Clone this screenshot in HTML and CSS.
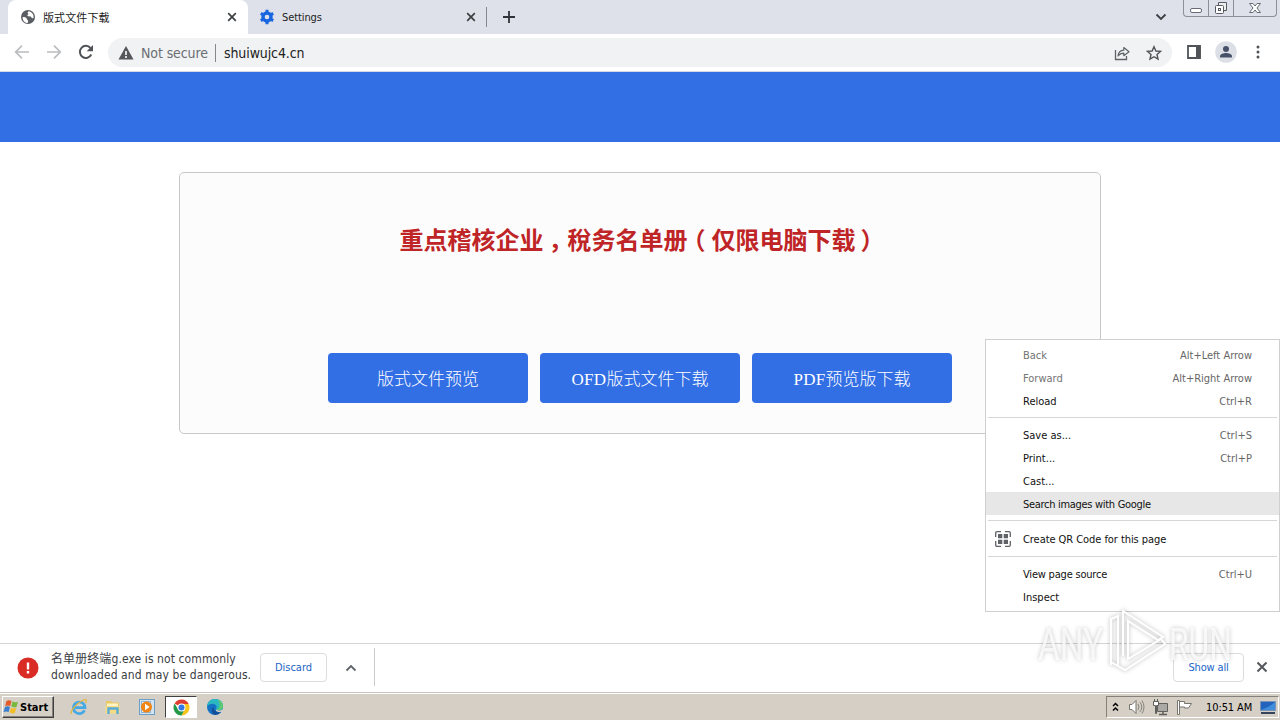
FILE: index.html
```html
<!DOCTYPE html>
<html lang="zh-CN">
<head>
	<meta charset="UTF-8">
	<title>版式文件下载</title>
	<link rel="stylesheet" href="styles.css">
</head>
<body>
	<div class="screen">
		<!-- tabs -->
		<div class="tabs">
			<div class="tab active">
				<svg class="tab-icon" width="16" height="16" viewBox="0 0 16 16"><circle cx="8" cy="8" r="7" fill="#5a5d61"/><path d="M2.6 8.2c2.2-.6 3.800.2 4.200 1.700.3 1 1.400.8 1.300 2.200l-.4 1.900C4.700 14 2.500 11.500 2.600 8.200zM8.500 2.300l-1 1.500 1 1.200-1.300 1.300 1 1 2.600.2 1.200 1.800 1.500-.3c.6-3.200-1.600-6.200-5-6.700z" fill="#fff"/></svg>
				<span class="tab-title cjk">版式文件下载</span>
				<svg class="tab-close" width="10" height="10" viewBox="0 0 10 10"><path d="M1.200 1.200l7.600 7.600M8.800 1.200l-7.600 7.600" stroke="#3c4043" stroke-width="1.700"/></svg>
			</div>
			<div class="tab second">
				<svg class="tab-icon" width="16" height="16" viewBox="0 0 16 16"><circle cx="8" cy="8" r="4" fill="none" stroke="#1a66e0" stroke-width="3.400"/><path d="M8 .8v3M8 12.200v3M1.800 4.400l2.600 1.500M11.600 10.100l2.600 1.500M1.800 11.600l2.600-1.500M11.600 5.900l2.600-1.500" stroke="#1a66e0" stroke-width="3"/></svg>
				<span class="tab-title">Settings</span>
				<svg class="tab-close" width="10" height="10" viewBox="0 0 10 10"><path d="M1.200 1.200l7.600 7.600M8.800 1.200l-7.600 7.600" stroke="#3c4043" stroke-width="1.700"/></svg>
			</div>
			<svg class="new-tab" width="12" height="12" viewBox="0 0 12 12"><path d="M6 0v12M0 6h12" stroke="#30343a" stroke-width="1.800"/></svg>
			<svg class="tab-search" width="12" height="8" viewBox="0 0 12 8"><path d="M1.500 1.500L6 6l4.500-4.500" fill="none" stroke="#3c4043" stroke-width="1.800"/></svg>
			<div class="win-btns">
				<span><svg width="14" height="16" viewBox="0 0 14 16"><rect x="1.500" y="8.500" width="11" height="4" rx="1.500" fill="#fff" stroke="#666b74"/></svg></span>
				<span><svg width="14" height="16" viewBox="0 0 14 16"><path d="M4.500 5V2.500h8v8H10" fill="#eee" stroke="#555a63"/><rect x="1.500" y="5.500" width="8" height="8" rx="1" fill="#fff" stroke="#555a63"/><rect x="4.500" y="8.500" width="2" height="2" fill="none" stroke="#555a63"/></svg></span>
				<span><svg width="14" height="16" viewBox="0 0 14 16"><path d="M1.500 3.500h3.500l2 2.500 2-2.500h3.500L9 8l3.500 4.500H9L7 10l-2 2.500H1.500L5 8z" fill="#fff" stroke="#666b74"/></svg></span>
			</div>
		</div>

		<!-- toolbar -->
		<div class="toolbar">
			<span class="tool"><svg width="16" height="16" viewBox="0 0 16 16"><path d="M15 8H2M8 1.700L1.700 8 8 14.300" fill="none" stroke="#babcbe" stroke-width="1.700"/></svg></span>
			<span class="tool"><svg width="16" height="16" viewBox="0 0 16 16"><path d="M1 8h13M8 1.700L14.300 8 8 14.300" fill="none" stroke="#babcbe" stroke-width="1.700"/></svg></span>
			<span class="tool"><svg width="16" height="16" viewBox="0 0 16 16"><path d="M13.300 10.500A6 6 0 1 1 12.500 4" fill="none" stroke="#505357" stroke-width="2"/><path d="M15 1v6.300H8.700z" fill="#505357"/></svg></span>
			<div class="omnibox">
				<svg class="warn" width="16" height="14" viewBox="0 0 16 14"><path d="M8 0l7.500 13.500H.5z" fill="#54575b"/><path d="M8 5v4M8 10v2" stroke="#fff" stroke-width="1.600"/></svg>
				<span class="insecure">Not secure</span>
				<span class="url">shuiwujc4.cn</span>
				<svg class="share" width="16" height="16" viewBox="0 0 16 16"><path d="M1.500 5v9.500h11V11" fill="none" stroke="#5f6368" stroke-width="1.300"/><path d="M4 11c.4-4 2.500-5.700 5.800-5.800V2.500L15 6.700l-5.200 4V8.200C7.500 8.200 5.500 9 4 11z" fill="none" stroke="#5f6368" stroke-width="1.200" stroke-linejoin="round"/></svg>
				<svg class="star" width="16" height="16" viewBox="0 0 16 16"><path d="M8 1.700l1.900 4.300 4.600.4-3.500 3.100 1 4.600L8 11.700l-4 2.400 1-4.600-3.500-3.100 4.600-.4z" fill="none" stroke="#505357" stroke-width="1.400"/></svg>
			</div>
			<span class="tool"><svg width="14" height="14" viewBox="0 0 14 14"><path d="M1 1h12v12H1z" fill="#fff" stroke="#505357" stroke-width="1.800"/><path d="M9 1h4.500v12H9z" fill="#505357"/></svg></span>
			<span class="tool"><svg width="22" height="22" viewBox="0 0 22 22"><circle cx="11" cy="11" r="10.800" fill="#dce0e6"/><circle cx="11" cy="8" r="3" fill="#475069"/><path d="M5 16.500v-1.300c0-2 3.700-3.200 6-3.200s6 1.200 6 3.200v1.300z" fill="#475069"/></svg></span>
			<span class="tool"><svg width="4" height="14" viewBox="0 0 4 14"><circle cx="2" cy="2" r="1.500" fill="#505357"/><circle cx="2" cy="7" r="1.500" fill="#505357"/><circle cx="2" cy="12" r="1.500" fill="#505357"/></svg></span>
		</div>

		<!-- page -->
		<div class="page">
			<div class="header"></div>
			<div class="box">
				<h1>重点稽核企业<span class="comma">，</span>稅务名单册<span class="open">（</span>仅限电脑下载<span class="close">）</span></h1>
				<div class="btns">
					<a class="btn">版式文件预览</a>
					<a class="btn"><span class="latin">OFD</span>版式文件下载</a>
					<a class="btn"><span class="latin">PDF</span>预览版下载</a>
				</div>
			</div>
		</div>

		<!-- download bar -->
		<div class="downloads">
			<svg class="danger" width="22" height="22" viewBox="0 0 22 22"><circle cx="11" cy="11" r="10.500" fill="#d92c25"/><path d="M11 5.500v7M11 14v2.500" stroke="#fff" stroke-width="2.400"/></svg>
			<p class="dl-text">名单册终端g.exe is not commonly<br>downloaded and may be dangerous.</p>
			<span class="dl-btn discard">Discard</span>
			<svg class="dl-more" width="12" height="8" viewBox="0 0 12 8"><path d="M1.500 6.500L6 2l4.500 4.500" fill="none" stroke="#5f6368" stroke-width="1.800"/></svg>
			<span class="dl-line"></span>
			<span class="dl-btn show-all">Show all</span>
			<svg class="dl-close" width="12" height="12" viewBox="0 0 12 12"><path d="M1.500 1.500l9 9M10.500 1.500l-9 9" stroke="#55585c" stroke-width="2"/></svg>
		</div>

		<!-- taskbar -->
		<div class="taskbar">
			<div class="start">
				<svg width="17" height="16" viewBox="0 0 17 16"><path d="M3.500 2Q6 .5 8.500 2L7.300 7Q5 5.800 2.200 7z" fill="#e5592a"/><path d="M9.500 2.500q2.500 1.300 5.500.2L13.500 8q-2.500 1-5.200-.4z" fill="#78b83c"/><path d="M2 8q2.600-1.300 5 0l-1.400 5Q3.500 11.800.5 13z" fill="#3b7fce"/><path d="M8 8.700q2.500 1.300 5.300.3l-1.500 5q-2.600 1-5.200-.4z" fill="#f3bd28"/></svg>
				<b>Start</b>
			</div>
			<span class="task"><svg width="18" height="18" viewBox="0 0 18 18"><path d="M14.500 12.200A5.800 5.800 0 1 1 15 9.700H5" fill="none" stroke="#45a9e6" stroke-width="2.700"/><path d="M1.500 16C-.5 13 8 4 13.500 2c3-1 3.300.5 2.200 3" fill="none" stroke="#e3b53a" stroke-width="1.300"/></svg></span>
			<span class="task"><svg width="18" height="18" viewBox="0 0 18 18"><path d="M2 3h5l1 1.500h7V15H2z" fill="#e9c964"/><path d="M3 5.500h11V8H3z" fill="#fff5c4"/><path d="M1.500 8h14v7.500h-14z" fill="#f5dc84"/><path d="M4.500 16v-5.500h9V16" fill="none" stroke="#58acd6" stroke-width="2.400"/></svg></span>
			<span class="task"><svg width="18" height="18" viewBox="0 0 18 18"><rect x="1.500" y="1.500" width="15" height="15" fill="#d3e3f0" stroke="#6b9fc8"/><rect x="3.500" y="3.500" width="9" height="11" fill="#fff" stroke="#8bb4d4"/><circle cx="8.500" cy="9" r="5.500" fill="#f08414"/><path d="M7 5.700l4.700 3.300L7 12.300z" fill="#fff"/></svg></span>
			<span class="task on"><svg width="17" height="17" viewBox="0 0 18 18"><path d="M9 9L1.700 4.800A8.400 8.400 0 0 1 16.600 5.300H9z" fill="#df3d30"/><path d="M9 9V5.300h7.600A8.400 8.400 0 0 1 9 17.400l3-6.500z" fill="#f9c51d"/><path d="M9 9l3.200 2L9 17.400A8.400 8.400 0 0 1 1.700 4.800L5.500 11z" fill="#25994a"/><circle cx="9" cy="9" r="4.200" fill="#fff"/><circle cx="9" cy="9" r="3.200" fill="#3477e5"/></svg></span>
			<span class="task"><svg width="18" height="18" viewBox="0 0 18 18"><circle cx="9" cy="9" r="8" fill="#1473c4"/><path d="M1 8.500C1.500 3.500 5 1 9 1c5 0 8 3.200 8 7 0 3-2.300 4.200-4.500 4.200-1.800 0-2.800-.6-2.300-1.400C12.500 7 6 3 1 8.500z" fill="#2cb8c0"/><path d="M11 1.400C14.500 2.200 17 4.700 17 8c0 3-2.300 4.200-4.500 4.200-.8 0-1.700-.2-2-.6C15 10 14.500 4 11 1.400z" fill="#5bcc72"/><path d="M7.500 8.500c-.7 3.500 2.500 5.500 7.500 5.100-1.500 2.300-3.500 3.300-6 3.300C5 15.500 4.500 10.500 7.500 8.500z" fill="#12509b"/><path d="M10.200 10.800c-.5 1 .8 1.700 2.600 1.700 1.400 0 2.800-.4 3.700-1.500l.7 1.800c-1.300 1.300-3.300 1.700-5 1.300-2.200-.4-3-2-2-3.300z" fill="#d4d0c8"/></svg></span>
			<div class="tray">
				<svg class="up" width="8" height="10" viewBox="0 0 8 10"><path d="M1 4l2.500-2.500L6 4M1 8.500L3.500 6 6 8.500" fill="none" stroke="#000" stroke-width="1.500"/></svg>
				<svg class="vol" width="17" height="16" viewBox="0 0 17 16"><path d="M1.500 5.500h2.500l4-4v13l-4-4H1.500z" fill="#fff" stroke="#77756f"/><path d="M10 5q2 3 0 6M12 3.200q3.600 4.800 0 9.600M14 1.500q4 6.500 0 13" fill="none" stroke="#85837d"/></svg>
				<svg class="net" width="17" height="17" viewBox="0 0 17 17"><path d="M5.500 4.500h10v8h-10z" fill="#aaa9a5" stroke="#62605c"/><path d="M7 15.500h8M11 13v2" stroke="#62605c" stroke-width="1.500"/><path d="M1.500 2.500h5v4h-2v8h-1v-8h-2zM2.500 0v3M5.500 0v3" fill="#fff" stroke="#62605c"/></svg>
				<svg class="flag" width="17" height="16" viewBox="0 0 17 16"><path d="M1.500 1.500h2v14h-2zM3.500 2.500h5v2h7l-3 4.500H8.500V8h-5z" fill="#fff" stroke="#77756f"/></svg>
				<span class="clock">10:51 AM</span>
				<svg class="desk" width="16" height="15" viewBox="0 0 16 15"><path d="M.5 1.500h15v9H.5z" fill="#2264bd" stroke="#7993b7"/><path d="M1 10C6 8 11 6 15 2v8z" fill="#3f8edb"/><path d="M1 12h14v2H1z" fill="#34445c"/></svg>
			</div>
		</div>

		<!-- context menu -->
		<div class="menu">
			<div class="item off"><span>Back</span><i>Alt+Left Arrow</i></div>
			<div class="item off"><span>Forward</span><i>Alt+Right Arrow</i></div>
			<div class="item"><span>Reload</span><i>Ctrl+R</i></div>
			<hr>
			<div class="item down"><span>Save as...</span><i>Ctrl+S</i></div>
			<div class="item down"><span>Print...</span><i>Ctrl+P</i></div>
			<div class="item down"><span>Cast...</span></div>
			<div class="item down hover"><span>Search images with Google</span></div>
			<hr class="low">
			<div class="item qr">
				<svg width="16" height="16" viewBox="0 0 16 16"><path d="M.7 6V2Q.7.700 2 .7h4M10 .7h4q1.300 0 1.300 1.300v4M15.300 10v4q0 1.300-1.300 1.300h-4M6 15.300H2Q.7 15.300.7 14v-4" fill="none" stroke="#5f6368" stroke-width="1.300"/><path d="M3 3h4.300v4.300H3zM8.700 3H13v4.300H8.700zM3 8.700h4.300V13H3zM8.700 8.700H13V13H8.700z" fill="#5f6368"/></svg>
				<span>Create QR Code for this page</span>
			</div>
			<hr>
			<div class="item down source"><span>View page source</span><i>Ctrl+U</i></div>
			<div class="item down"><span>Inspect</span></div>
		</div>

		<!-- watermark -->
		<svg class="mark" width="206" height="70" viewBox="0 0 206 70">
			<g class="mark-text">
				<text x="8" y="54" textLength="65" lengthAdjust="spacingAndGlyphs">ANY</text>
				<text x="139" y="54" textLength="63" lengthAdjust="spacingAndGlyphs">RUN</text>
			</g>
			<path class="mark-line" d="M81 59V13l7-3v50l-7-4M93 50V5l40 26-5 3L98 15v38l33-20 4 5-40 26-7-4"/>
		</svg>
	</div>
</body>
</html>
```

FILE: styles.css
```css
html,
body {
	margin: 0;
	padding: 0;
	overflow: hidden;
}

* {
	box-sizing: border-box;
}

svg {
	display: block;
	flex: none;
}

.screen {
	position: relative;
	display: flex;
	flex-direction: column;
	width: 1280px;
	height: 720px;
	overflow: hidden;
	background: #fff;
	font-family: "DejaVu Sans Condensed", "Noto Sans CJK SC", sans-serif;
	font-size: 11px;
	color: #222;
	white-space: nowrap;
}

/* tabs */
.tabs {
	display: flex;
	align-items: center;
	height: 34px;
	padding-left: 8px;
	background: #dee1e9;
}

.tab {
	display: flex;
	align-items: center;
	height: 34px;
	width: 240px;
	padding: 0 11px 0 12px;
}

.tab.active {
	background: #fff;
	border-radius: 8px 8px 0 0;
}

.tab.second {
	width: 239px;
	height: 20px;
	padding: 0 10px 0 11px;
	border-right: 1px solid #858890;
}

.tab-title {
	flex: 1;
	margin-left: 7px;
	letter-spacing: -0.1px;
}

.tab-title.cjk {
	font-family: "Noto Sans CJK SC", sans-serif;
	letter-spacing: 0.1px;
	line-height: 14px;
	padding-bottom: 1px;
}

.new-tab {
	margin-left: 16px;
}

.tab-search {
	margin-left: auto;
	margin-right: 16px;
}

.win-btns {
	display: flex;
	align-self: flex-start;
	width: 94px;
	height: 17px;
	margin-right: 3px;
	border: 1px solid #8b8f99;
	border-top: 0;
	border-radius: 0 0 4px 4px;
}

.win-btns span {
	display: flex;
	justify-content: center;
	width: 25px;
	border-right: 1px solid #8b8f99;
}

.win-btns span:last-child {
	flex: 1;
	border: 0;
}

/* toolbar */
.toolbar {
	display: flex;
	align-items: center;
	height: 38px;
	padding: 0 6px;
	border-bottom: 1px solid #d3d9e5;
}

.tool {
	display: flex;
	align-items: center;
	justify-content: center;
	width: 32px;
	height: 34px;
	padding-bottom: 2px;
}

.omnibox {
	display: flex;
	flex: 1;
	align-items: center;
	height: 29px;
	margin: 0 6px;
	padding: 0 10px;
	border-radius: 15px;
	background: #f0f2f4;
	font-size: 14px;
}

.insecure {
	width: 75px;
	margin-left: 7px;
	border-right: 1px solid #85888c;
	line-height: 18px;
	letter-spacing: -0.1px;
	color: #6b6e72;
}

.url {
	margin-left: 8px;
	letter-spacing: -0.1px;
}

.share {
	margin-left: auto;
	margin-right: 16px;
}

/* page */
.page {
	flex: 1;
	background: #fff;
}

.header {
	height: 70px;
	background: #326ee4;
}

.box {
	width: 922px;
	height: 262px;
	margin: 30px auto 0;
	padding-top: 48px;
	border: 1px solid #c8c8c8;
	border-radius: 5px;
	background: #fcfcfc;
	text-align: center;
}

.box h1 {
	height: 36px;
	margin: 0 1px 0 0;
	font: bold 24px/36px "Noto Sans CJK SC", sans-serif;
	color: #bf2426;
}

/* 标点居中 */
.box h1 span {
	display: inline-block;
}

.comma {
	transform: translateX(5px);
}

.open {
	transform: translateX(-6px);
}

.close {
	transform: translateX(5px);
}

.btns {
	display: flex;
	justify-content: center;
	gap: 12px;
	margin-top: 96px;
}

.btn {
	width: 200px;
	height: 50px;
	padding-top: 2px;
	border-radius: 4px;
	background: #326ee4;
	color: #fff;
	font: 300 17px/46px "Noto Sans CJK SC", sans-serif;
}

.latin {
	font-family: "Liberation Serif", serif;
	letter-spacing: 0.3px;
}

/* download bar */
.downloads {
	display: flex;
	align-items: center;
	height: 49px;
	padding: 0 12px 2px 17px;
	border-top: 1px solid #d5d5d5;
}

.danger {
	margin-top: 2px;
}

.dl-text {
	width: 200px;
	margin: 0 9px 0 12px;
	font-size: 12px;
	line-height: 16px;
	letter-spacing: 0.09px;
	color: #3c4043;
}

.dl-btn {
	height: 29px;
	border: 1px solid #dadce0;
	border-radius: 4px;
	line-height: 27px;
	text-align: center;
	color: #1a65c5;
}

.discard {
	width: 67px;
}

.dl-more {
	margin: 2px 17px 0 18px;
}

.dl-line {
	width: 1px;
	height: 38px;
	background: #c9cbce;
}

.show-all {
	width: 71px;
	margin-left: auto;
	margin-right: 12px;
	letter-spacing: -0.15px;
}

/* taskbar */
.taskbar {
	display: flex;
	align-items: center;
	height: 28px;
	padding: 2px 1px 1px 2px;
	border-top: 1px solid #c9c5be;
	box-shadow: inset 0 1px #fff;
	background: #d5cfc6;
	color: #000;
}

.start {
	display: flex;
	align-items: center;
	width: 52px;
	height: 22px;
	margin-right: 9px;
	border: 1px solid;
	border-color: #fff #404040 #404040 #fff;
	box-shadow: inset -1px -1px #85817a;
	font-size: 11px;
}

.task {
	display: flex;
	align-items: center;
	justify-content: center;
	width: 32px;
	height: 22px;
	margin-right: 2px;
}

.task.on {
	border: 1px solid;
	border-color: #404040 #fff #fff #404040;
	background: #fff;
}

.tray {
	display: flex;
	align-items: center;
	width: 173px;
	height: 22px;
	margin-left: auto;
	padding-left: 5px;
	border: 1px solid;
	border-color: #85817a #fff #fff #85817a;
}

.up {
	margin-right: 8px;
}

.vol {
	margin-right: 7px;
}

.net {
	margin-right: 7px;
}

.clock {
	width: 47px;
	margin: 0 7px 0 13px;
	letter-spacing: -0.1px;
}

/* context menu */
.menu {
	position: absolute;
	top: 339px;
	left: 985px;
	width: 295px;
	height: 273px;
	padding: 4px 0 3px;
	border: 1px solid #cfcfcf;
	background: #fff;
	color: #111;
}

.item {
	display: flex;
	align-items: center;
	justify-content: space-between;
	height: 23px;
	padding: 0 27px 0 37px;
}

.item.down {
	padding-top: 2px;
}

.item i {
	font-style: normal;
	color: #666;
}

.item.off {
	color: #737373;
}

.item.hover {
	background: #e7e7e7;
	letter-spacing: -0.3px;
}

.item.source span {
	letter-spacing: -0.2px;
}

.item.qr {
	justify-content: flex-start;
	gap: 12px;
	height: 26px;
	padding-left: 9px;
	letter-spacing: -0.06px;
}

.menu hr {
	height: 1px;
	margin: 4px 2px 5px;
	border: 0;
	background: #d6d6d6;
}

.menu hr.low {
	margin-top: 5px;
}

/* watermark */
.mark {
	position: absolute;
	top: 606px;
	left: 1030px;
	filter: drop-shadow(0 0 2px rgba(0, 0, 0, 0.3));
}

.mark-text {
	font: 44px Roboto, sans-serif;
	fill: rgba(255, 255, 255, 0.75);
}

.mark-line {
	fill: none;
	stroke: #fff;
	stroke-width: 2;
}
```
